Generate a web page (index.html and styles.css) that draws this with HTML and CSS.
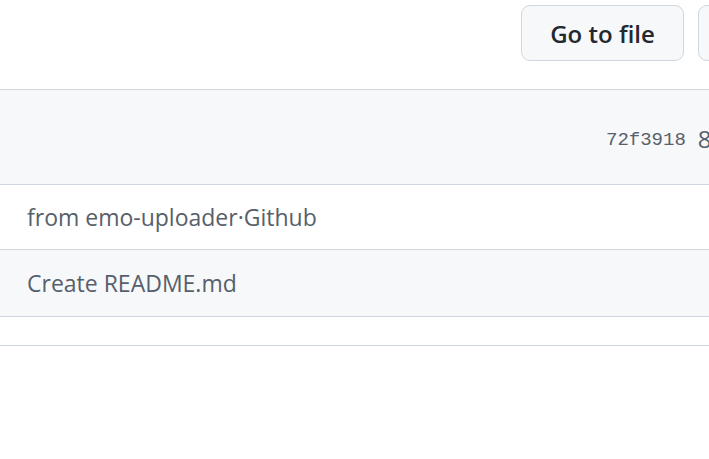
FILE: index.html
```html
<!DOCTYPE html>
<html>
<head>
<meta charset="utf-8">
<link rel="stylesheet" href="styles.css">
</head>
<body>
<div class="page">
  <div class="toolbar">
    <button class="btn">Go to file</button>
    <button class="btn">Add file</button>
  </div>
  <div class="box">
    <div class="box-header">
      <span class="sha">72f3918</span>
      <span class="commits">8</span>
    </div>
    <div class="row"><span class="msg">from emo-uploader·Github</span></div>
    <div class="row alt"><span class="msg">Create README.md</span></div>
    <div class="row short"></div>
  </div>
</div>
</body>
</html>
```
FILE: styles.css
```css
html, body {
  margin: 0;
  padding: 0;
  overflow: hidden;
  background: #ffffff;
}
.page {
  width: 1000px;
  font-family: "Open Sans", "Noto Sans", sans-serif;
}
.toolbar {
  display: flex;
  gap: 14px;
  padding: 5px 0 0 521px;
  height: 89px;
  box-sizing: border-box;
}
.btn {
  height: 56px;
  width: 163px;
  box-sizing: border-box;
  border: 1px solid #d0d7de;
  border-radius: 9px;
  background: #f6f8fa;
  color: #24292f;
  font-family: "Open Sans", "Noto Sans", sans-serif;
  font-size: 24px;
  font-weight: 600;
  padding: 0;
}
.box {
  border-top: 1px solid #d0d7de;
}
.box-header {
  height: 95px;
  background: #f6f8fa;
  border-bottom: 1px solid #d0d7de;
  display: flex;
  align-items: center;
  gap: 12px;
  padding-left: 606px;
  box-sizing: border-box;
}
.sha {
  font-family: "Liberation Mono", monospace;
  font-size: 19px;
  color: #57606a;
  padding-top: 6px;
}
.commits {
  font-size: 24px;
  color: #57606a;
  padding-top: 2px;
}
.row {
  height: 64px;
  border-bottom: 1px solid #d0d7de;
  display: flex;
  align-items: center;
  padding-left: 27px;
}
.row.alt {
  background: #f6f8fa;
  height: 66px;
}
.row.short {
  height: 28px;
}
.msg {
  font-size: 23px;
  color: #57606a;
}
```
